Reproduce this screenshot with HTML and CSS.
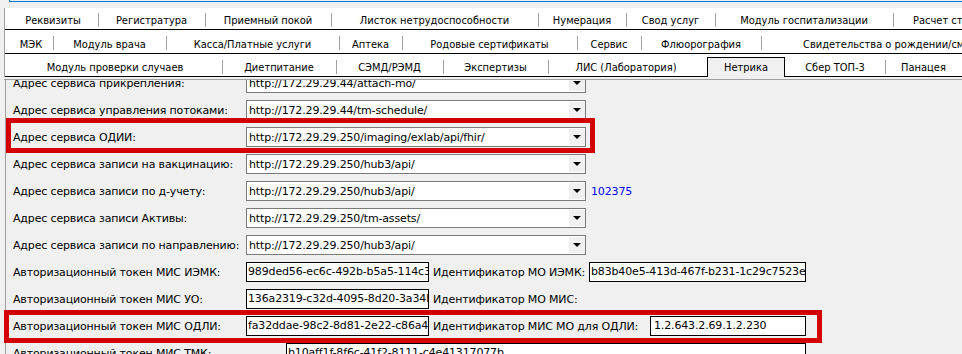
FILE: index.html
```html
<!DOCTYPE html>
<html lang="ru">
<head>
  <meta charset="UTF-8" />
  <title>Нетрика</title>
  <link rel="stylesheet" href="styles.css">
</head>
<body>

  <div class="topbar"><div class="topbar-line"></div></div>

  <!-- tab headers -->
  <div class="tabs">
    <div class="tabrow r1">
      <span class="tab">Реквизиты</span>
      <span class="tab">Регистратура</span>
      <span class="tab">Приемный покой</span>
      <span class="tab">Листок нетрудоспособности</span>
      <span class="tab">Нумерация</span>
      <span class="tab">Свод услуг</span>
      <span class="tab">Модуль госпитализации</span>
      <span class="tab tab-last">Расчет стоимости</span>
    </div>
    <div class="tabrow r2">
      <span class="tab">МЭК</span>
      <span class="tab">Модуль врача</span>
      <span class="tab">Касса/Платные услуги</span>
      <span class="tab">Аптека</span>
      <span class="tab">Родовые сертификаты</span>
      <span class="tab">Сервис</span>
      <span class="tab">Флюорография</span>
      <span class="tab tab-last">Свидетельства о рождении/смерти</span>
    </div>
    <div class="tabrow r3">
      <span class="tab">Модуль проверки случаев</span>
      <span class="tab">Диетпитание</span>
      <span class="tab">СЭМД/РЭМД</span>
      <span class="tab">Экспертизы</span>
      <span class="tab">ЛИС (Лаборатория)</span>
      <span class="tab sel">Нетрика</span>
      <span class="tab">Сбер ТОП-3</span>
      <span class="tab">Панацея</span>
    </div>
  </div>
  <div class="strip"></div>

  <!-- tab page -->
  <div class="panel">
    <div class="list">
      <div class="field">
        <span class="label">Адрес сервиса прикрепления:</span>
        <div class="combo"><span>http://172.29.29.44/attach-mo/</span><span class="arrow"></span></div>
      </div>
      <div class="field">
        <span class="label">Адрес сервиса управления потоками:</span>
        <div class="combo"><span>http://172.29.29.44/tm-schedule/</span><span class="arrow"></span></div>
      </div>
      <div class="field">
        <span class="label">Адрес сервиса ОДИИ:</span>
        <div class="combo"><span>http://172.29.29.250/imaging/exlab/api/fhir/</span><span class="arrow"></span></div>
      </div>
      <div class="field">
        <span class="label">Адрес сервиса записи на вакцинацию:</span>
        <div class="combo"><span>http://172.29.29.250/hub3/api/</span><span class="arrow"></span></div>
      </div>
      <div class="field">
        <span class="label">Адрес сервиса записи по д-учету:</span>
        <div class="combo"><span>http://172.29.29.250/hub3/api/</span><span class="arrow"></span></div>
        <span class="num">102375</span>
      </div>
      <div class="field">
        <span class="label">Адрес сервиса записи Активы:</span>
        <div class="combo"><span>http://172.29.29.250/tm-assets/</span><span class="arrow"></span></div>
      </div>
      <div class="field">
        <span class="label">Адрес сервиса записи по направлению:</span>
        <div class="combo"><span>http://172.29.29.250/hub3/api/</span><span class="arrow"></span></div>
      </div>
      <div class="field">
        <span class="label">Авторизационный токен МИС ИЭМК:</span>
        <div class="tb tb-short"><span class="tb-text">989ded56-ec6c-492b-b5a5-114c3f0e21a7</span></div>
        <span class="idlabel">Идентификатор МО ИЭМК:</span>
        <div class="tb tb-id"><span class="tb-text">b83b40e5-413d-467f-b231-1c29c7523e1f</span></div>
      </div>
      <div class="field">
        <span class="label">Авторизационный токен МИС УО:</span>
        <div class="tb tb-short"><span class="tb-text">136a2319-c32d-4095-8d20-3a34b7c1e590</span></div>
        <span class="idlabel">Идентификатор МО МИС:</span>
      </div>
      <div class="field">
        <span class="label">Авторизационный токен МИС ОДЛИ:</span>
        <div class="tb tb-short"><span class="tb-text">fa32ddae-98c2-8d81-2e22-c86a4e0b7d13</span></div>
        <span class="idlabel idlabel-long">Идентификатор МИС МО для ОДЛИ:</span>
        <div class="tb tb-oid"><span class="tb-text">1.2.643.2.69.1.2.230</span></div>
      </div>
      <div class="field">
        <span class="label label-wide">Авторизационный токен МИС ТМК:</span>
        <div class="tb tb-wide"><span class="tb-text">b10aff1f-8f6c-41f2-8111-c4e41317077b</span></div>
      </div>
    </div>
  </div>

  <!-- red highlight frames drawn over the form -->
  <div class="mark mark-odii"></div>
  <div class="mark mark-odli"></div>

</body>
</html>
```

FILE: styles.css
```css
body {
  margin: 0;
  height: 354px;
  overflow: hidden;
  background-color: #f0f0f0;
  font-family: "DejaVu Sans", Tahoma, sans-serif;
  font-size: 11px;
  color: #000;
}

.topbar {
  height: 8px;
}

.topbar-line {
  margin-left: 9px;
  height: 1px;
  border-left: 1px solid #0078d7;
  border-bottom: 1px solid #0078d7;
}

/* tab headers */
.tabs {
  margin-left: 4px;
  border-left: 1px solid #a0a0a0;
  background-color: #fff;
  font-family: "DejaVu Sans Condensed", "DejaVu Sans", sans-serif;
  font-stretch: condensed;
}

.tabrow {
  display: flex;
  overflow: hidden;
  white-space: nowrap;
  border-bottom: 1px solid #000;
}

.r1 { height: 21px; }
.r2 { height: 23px; }
.r3 { height: 22px; overflow: visible; }

.tab {
  flex: none;
  box-sizing: border-box;
  text-align: center;
  line-height: 17px;
  background-image: linear-gradient(#a0a0a0, #a0a0a0);
  background-repeat: no-repeat;
  background-size: 1px 14px;
}

.tab:first-child { background-image: none; }

.r1 .tab { padding-top: 4px; background-position: 0 5px; }
.r2 .tab { padding-top: 6px; background-position: 0 6px; }
.r3 .tab { padding-top: 5px; background-position: 0 6px; }

.tab-last {
  text-align: left;
}

.r1 .tab:nth-child(1) { width: 93px; padding-left: 3px; }
.r1 .tab:nth-child(2) { width: 107px; }
.r1 .tab:nth-child(3) { width: 126px; }
.r1 .tab:nth-child(4) { width: 207px; }
.r1 .tab:nth-child(5) { width: 88px; }
.r1 .tab:nth-child(6) { width: 89px; }
.r1 .tab:nth-child(7) { width: 178px; }
.r1 .tab:nth-child(8) { padding-left: 20px; }

.r2 .tab:nth-child(1) { width: 48px; padding-left: 4px; }
.r2 .tab:nth-child(2) { width: 113px; }
.r2 .tab:nth-child(3) { width: 173px; }
.r2 .tab:nth-child(4) { width: 63px; }
.r2 .tab:nth-child(5) { width: 175px; }
.r2 .tab:nth-child(6) { width: 64px; }
.r2 .tab:nth-child(7) { width: 120px; }
.r2 .tab:nth-child(8) { padding-left: 42px; }

.r3 .tab:nth-child(1) { width: 217px; padding-left: 3px; }
.r3 .tab:nth-child(2) { width: 114px; }
.r3 .tab:nth-child(3) { width: 107px; }
.r3 .tab:nth-child(4) { width: 105px; }
.r3 .tab:nth-child(5) { width: 159px; padding-right: 3px; }
.r3 .tab:nth-child(6) { width: 78px; }
.r3 .tab:nth-child(7) { width: 100px; }
.r3 .tab:nth-child(8) { width: 77px; }

.r3 .tab.sel {
  align-self: flex-end;
  height: 20px;
  margin-bottom: -1px;
  padding-top: 1px;
  background: #f0f0f0;
  border: 1px solid #000;
  border-bottom: none;
}

.tab.sel + .tab { background-image: none; }

.strip {
  margin-left: 4px;
  height: 2px;
  border-bottom: 1px solid #a0a0a0;
}

/* tab page */
.panel {
  margin-left: 5px;
  border-left: 1px solid #a0a0a0;
  padding-left: 7px;
  height: 274px;
  overflow: hidden;
  letter-spacing: -0.15px;
}

.list {
  display: flex;
  flex-direction: column;
  gap: 7px;
  margin-top: -7px;
}

.field {
  display: flex;
  align-items: center;
  height: 20px;
  white-space: nowrap;
}

.label {
  flex: none;
  width: 233px;
}

.label-wide { width: 273px; }

.combo {
  flex: none;
  box-sizing: border-box;
  width: 340px;
  height: 20px;
  padding-left: 2px;
  display: flex;
  align-items: center;
  background-color: #fff;
  border: 1px solid #7a7a7a;
}

.arrow {
  align-self: stretch;
  width: 16px;
  margin: 1px 0 1px auto;
  display: flex;
  align-items: center;
  justify-content: center;
  background-color: #f0f0f0;
}

.arrow::after {
  content: "";
  border-left: 4px solid transparent;
  border-right: 4px solid transparent;
  border-top: 4px solid #000;
}

.num {
  margin-left: 5px;
  color: #0000ff;
}

.tb {
  flex: none;
  box-sizing: border-box;
  height: 20px;
  padding-left: 1px;
  line-height: 18px;
  overflow: hidden;
  background-color: #fff;
  border: 1px solid #000;
}

.tb-text {
  display: block;
  overflow: hidden;
}

.tb-short { width: 183px; }
.tb-id { width: 217px; }
.tb-oid { width: 156px; padding-left: 3px; }
.tb-wide { width: 520px; }

.idlabel {
  flex: none;
  width: 156px;
  margin-left: 4px;
}

.idlabel-long { width: 217px; }

/* highlight frames */
.mark {
  position: absolute;
  box-sizing: border-box;
  border: 5px solid #d40000;
}

.mark-odii { left: 6px; top: 118px; width: 589px; height: 35px; }
.mark-odli { left: 4px; top: 310px; width: 818px; height: 33px; }
```
